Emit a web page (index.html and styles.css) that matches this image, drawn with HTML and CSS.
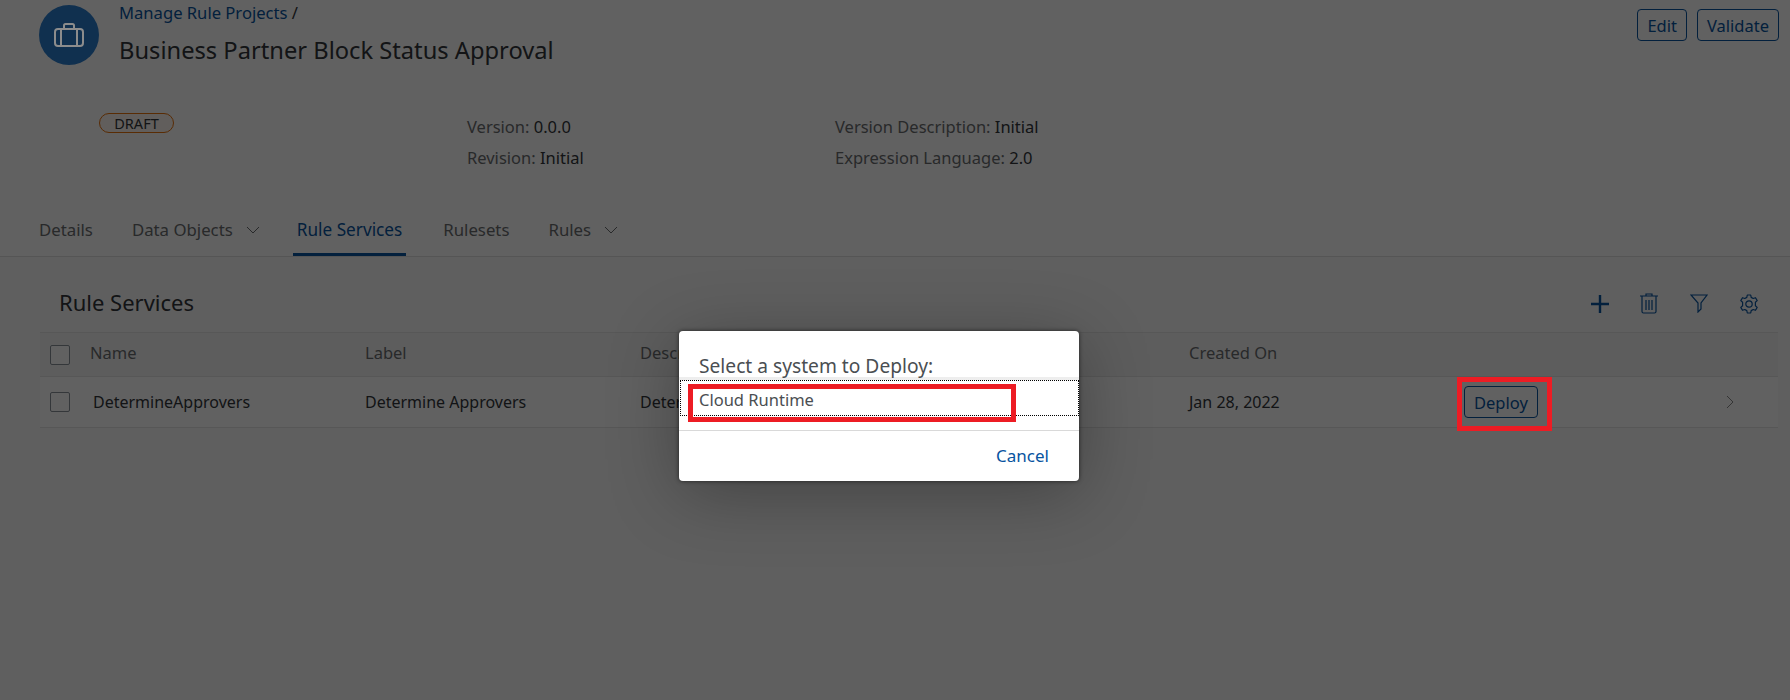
FILE: index.html
```html
<!DOCTYPE html>
<html lang="en">

<head>
    <meta charset="UTF-8">
    <title>Business Partner Block Status Approval</title>
    <link rel="stylesheet" href="styles.css">
</head>

<body>
    <div class="page">
        <header class="object-header">
            <div class="title-row">
                <div class="avatar">
                    <svg width="30" height="24" viewBox="0 0 30 24" fill="none" stroke="#8c8c8c" stroke-width="2">
                        <rect x="1" y="6" width="28" height="17" rx="3" />
                        <path d="M10 6V2.500Q10 1 11.500 1H18.500Q20 1 20 2.500V6M7 6V23M23 6V23" />
                    </svg>
                </div>
                <div class="title-text">
                    <div class="crumbs"><a class="link">Manage Rule Projects</a> <span>/</span></div>
                    <h1>Business Partner Block Status Approval</h1>
                </div>
                <div class="actions">
                    <button class="btn">Edit</button>
                    <button class="btn">Validate</button>
                </div>
            </div>

            <div class="attrs">
                <div class="attr-status"><span class="badge">DRAFT</span></div>
                <div class="attr-col attr-col-one">
                    <p><span class="key">Version:</span> 0.0.0</p>
                    <p><span class="key">Revision:</span> Initial</p>
                </div>
                <div class="attr-col">
                    <p><span class="key">Version Description:</span> Initial</p>
                    <p><span class="key">Expression Language:</span> 2.0</p>
                </div>
            </div>

            <nav class="tabs">
                <a class="tab">Details</a>
                <a class="tab tab-menu">Data Objects
                    <svg width="14" height="8" viewBox="0 0 14 8" fill="none" stroke="#6a6d70"><path d="M1 1L7 7L13 1" /></svg>
                </a>
                <a class="tab active">Rule Services</a>
                <a class="tab">Rulesets</a>
                <a class="tab tab-menu">Rules
                    <svg width="14" height="8" viewBox="0 0 14 8" fill="none" stroke="#6a6d70"><path d="M1 1L7 7L13 1" /></svg>
                </a>
            </nav>
        </header>

        <section class="content">
            <div class="toolbar">
                <h2>Rule Services</h2>
                <div class="tools">
                    <svg width="18" height="18" viewBox="0 0 18 18" stroke="#0854a0" stroke-width="2.400"><path d="M9 0V18M0 9H18" /></svg>
                    <svg width="18" height="21" viewBox="0 0 18 21" fill="none" stroke="#0854a0" stroke-width="1.200">
                        <path d="M0 3H18M6 3V1H12V3M2 3V18.500Q2 20 3.500 20H14.500Q16 20 16 18.500V3M6 7V17M9 7V17M12 7V17" />
                    </svg>
                    <svg width="18" height="19" viewBox="0 0 18 19" fill="none" stroke="#0854a0" stroke-width="1.200">
                        <path d="M1 1H17L11 9V15L8 18V9Z" />
                    </svg>
                    <svg width="20" height="20" viewBox="0 0 20 20" fill="none" stroke="#0854a0" stroke-width="1.200">
                        <circle cx="10" cy="10" r="3.200" />
                        <path d="M8.300 1H11.700L12.200 3.400L14.200 4.500L16.500 3.700L18.200 6.600L16.400 8.200V11.800L18.200 13.400L16.500 16.300L14.200 15.500L12.200 16.600L11.700 19H8.300L7.800 16.600L5.800 15.500L3.500 16.300L1.800 13.400L3.600 11.800V8.200L1.800 6.600L3.500 3.700L5.800 4.500L7.800 3.400Z" stroke-linejoin="round" />
                    </svg>
                </div>
            </div>

            <div class="table">
                <div class="row row-head">
                    <span class="cell-check"><span class="checkbox"></span></span>
                    <span>Name</span>
                    <span>Label</span>
                    <span>Description</span>
                    <span></span>
                    <span>Created On</span>
                    <span></span>
                    <span></span>
                </div>
                <div class="row row-body">
                    <span class="cell-check"><span class="checkbox"></span></span>
                    <span class="cell-name">DetermineApprovers</span>
                    <span>Determine Approvers</span>
                    <span class="cell-clip">Determine</span>
                    <span></span>
                    <span>Jan 28, 2022</span>
                    <span class="cell-deploy"><button class="btn">Deploy</button></span>
                    <span class="cell-nav">
                        <svg width="8" height="14" viewBox="0 0 8 14" fill="none" stroke="#8a8a8a"><path d="M1 1L7 7L1 13" /></svg>
                    </span>
                </div>
            </div>
        </section>

        <div class="block-layer"></div>

        <div class="dialog">
            <div class="dialog-title">Select a system to Deploy:</div>
            <div class="dialog-item">Cloud Runtime</div>
            <div class="dialog-footer"><a class="dialog-cancel">Cancel</a></div>
        </div>

        <div class="mark mark-item"></div>
        <div class="mark mark-deploy"></div>
    </div>
</body>

</html>
```

FILE: styles.css
```css
body {
    margin: 0;
    font-family: "Noto Sans", "Open Sans", sans-serif;
    color: #32363a;
}

.page {
    position: relative;
    width: 1790px;
    height: 700px;
    overflow: hidden;
    background-color: #fafafa;
}

.object-header {
    display: flex;
    flex-direction: column;
    height: 257px;
    background-color: #fff;
    border-bottom: 1px solid #e0e0e0;
    box-sizing: border-box;
}

.title-row {
    display: flex;
    padding: 5px 11px 0 39px;
}

/* sits above the block layer, its colours are already the dimmed ones */
.avatar {
    position: relative;
    z-index: 2;
    width: 60px;
    height: 60px;
    border-radius: 50%;
    background-color: #10304f;
    display: flex;
    justify-content: center;
    align-items: center;
}

.title-text {
    margin-left: 20px;
    flex: 1;
}

.crumbs {
    font-size: 16.600px;
    line-height: 16px;
}

.link {
    color: #0854a0;
}

h1 {
    margin: 14px 0 0;
    font-size: 23.700px;
    line-height: 30px;
    font-weight: 400;
    color: #32363a;
}

.actions {
    display: flex;
    gap: 10px;
    padding-top: 4px;
    align-items: flex-start;
}

.btn {
    height: 32px;
    padding: 0 9px;
    font-family: inherit;
    font-size: 16.500px;
    color: #0854a0;
    background-color: #fff;
    border: 1px solid #0854a0;
    border-radius: 4px;
}

.attrs {
    display: flex;
    margin-top: 43px;
    font-size: 16.500px;
    color: #32363a;
}

.attr-status {
    width: 467px;
    padding: 5px 0 0 99px;
    box-sizing: border-box;
}

.badge {
    display: block;
    width: 75px;
    height: 20px;
    box-sizing: border-box;
    border: 1px solid #e9730c;
    border-radius: 10px;
    background-color: #fef7f1;
    font-size: 14.500px;
    line-height: 18px;
    text-align: center;
}

.attr-col {
    padding-top: 8px;
}

.attr-col-one {
    width: 368px;
}

.attr-col p {
    margin: 0 0 9px;
    line-height: 22px;
}

.key {
    color: #6a6d70;
}

.tabs {
    display: flex;
    gap: 31px;
    margin-top: auto;
    padding-left: 35px;
}

.tab {
    display: flex;
    align-items: center;
    gap: 13px;
    padding: 0 4px 8px;
    height: 45px;
    box-sizing: border-box;
    font-size: 16.800px;
    color: #6a6d70;
}

.tab.active {
    margin: 0 2px 0 -2px;
    font-size: 17.200px;
    color: #0854a0;
    box-shadow: inset 0 -3px 0 #0854a0;
}

.content {
    padding: 0 12px 0 40px;
}

.toolbar {
    display: flex;
    justify-content: space-between;
    align-items: center;
    height: 75px;
    padding: 14px 0 0 19px;
    box-sizing: border-box;
}

h2 {
    margin: 0;
    font-size: 22px;
    font-weight: 400;
    color: #32363a;
}

.tools {
    display: flex;
    align-items: center;
    gap: 31.500px;
    padding-right: 19px;
    padding-top: 4px;
}

.table {
    font-size: 16px;
    color: #32363a;
}

.row {
    display: grid;
    grid-template-columns: 50px 275px 275px 274px 275px 275px 261px 1fr;
    align-items: center;
    border-bottom: 1px solid #e4e4e4;
}

.row-head {
    height: 45px;
    padding-bottom: 4px;
    border-top: 1px solid #e4e4e4;
    box-sizing: border-box;
    background-color: #f5f5f5;
    color: #6a6d70;
    font-size: 16.500px;
}

.row-body {
    height: 51px;
    box-sizing: border-box;
    background-color: #fff;
}

.cell-check {
    padding-left: 10px;
}

.row-head .cell-check {
    padding-top: 4px;
}

.checkbox {
    display: block;
    width: 20px;
    height: 20px;
    box-sizing: border-box;
    border: 1px solid #89919a;
    border-radius: 2px;
    background-color: #fff;
}

.cell-name {
    padding-left: 3px;
}

.cell-nav {
    display: flex;
    padding-left: 1px;
}

.dialog {
    position: absolute;
    z-index: 3;
    left: 679px;
    top: 331px;
    width: 400px;
    height: 150px;
    background-color: #fff;
    border-radius: 4px;
    box-shadow: 0 0 4px rgba(0, 0, 0, 0.6), 0 12px 70px rgba(0, 0, 0, 0.3);
}

.dialog-title {
    height: 49px;
    padding: 22px 20px 0;
    box-sizing: border-box;
    font-size: 19.200px;
    line-height: 26px;
    color: #4a4e52;
    border-bottom: 3px solid #eeeeee;
}

.dialog-item {
    height: 36px;
    margin: 0 0 0 1px;
    padding-left: 18px;
    font-size: 16.500px;
    line-height: 37px;
    color: #4a4e52;
    border: 1px dotted #000;
    box-sizing: border-box;
}

.dialog-footer {
    margin-top: 14px;
    border-top: 1px solid #d9d9d9;
    height: 48px;
    display: flex;
    justify-content: flex-end;
    align-items: center;
    padding-right: 30px;
}

.dialog-cancel {
    font-size: 17px;
    color: #0854a0;
}

.block-layer {
    position: absolute;
    z-index: 1;
    inset: 0;
    background-color: rgba(0, 0, 0, 0.62);
}

.mark {
    position: absolute;
    z-index: 4;
    box-sizing: border-box;
    border: 5px solid #ed1c24;
}

.mark-item {
    left: 688px;
    top: 384px;
    width: 328px;
    height: 38px;
}

.mark-deploy {
    left: 1457px;
    top: 377px;
    width: 95px;
    height: 54px;
}
```
